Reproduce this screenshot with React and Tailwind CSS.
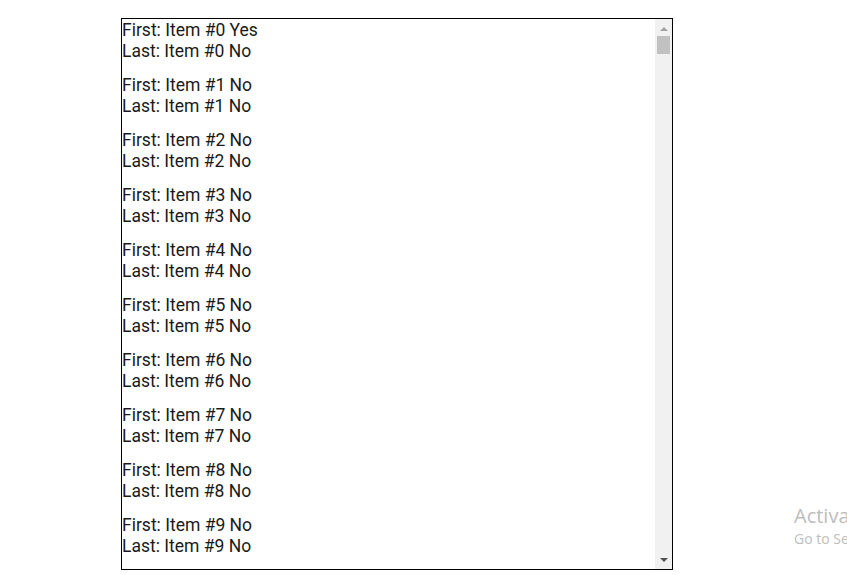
const items = Array.from({ length: 10 }, (_, i) => i);

export default function App() {
  return (
    <div className="relative h-[575px] w-[847px] overflow-hidden bg-white font-['Roboto',sans-serif]">
      <div className="ml-[121px] pt-[18px]">
        <div className="flex h-[552px] w-[552px] border border-black">
          <div className="flex-1 overflow-hidden pt-[1px]">
            {items.map((i) => (
              <div key={i} className="h-[55px] text-[17.5px] leading-[21px] text-[#1a1a1a]">
                <div>First: Item #{i} {i === 0 ? "Yes" : "No"}</div>
                <div>Last: Item #{i} No</div>
              </div>
            ))}
          </div>
          {/* scrollbar */}
          <div className="flex w-[17px] flex-col items-center bg-[#f1f1f1]">
            <div className="flex h-[17px] w-full items-center justify-center pt-[2px]">
              <svg width="8" height="4" viewBox="0 0 8 4">
                <polygon points="4,0 8,4 0,4" fill="#a3a3a3" />
              </svg>
            </div>
            <div className="h-[18px] w-[13px] bg-[#c1c1c1]" />
            <div className="flex-1" />
            <div className="flex h-[17px] w-full items-center justify-center pb-[2px]">
              <svg width="8" height="4" viewBox="0 0 8 4">
                <polygon points="0,0 8,0 4,4" fill="#505050" />
              </svg>
            </div>
          </div>
        </div>
      </div>
      <div className="absolute left-[794px] top-[506px] whitespace-nowrap font-['Open_Sans',sans-serif] leading-none text-[#bdbdbd]">
        <div className="text-[20px]">Activate Windows</div>
        <div className="mt-[6px] text-[14px]">Go to Settings to activate Windows.</div>
      </div>
    </div>
  );
}
